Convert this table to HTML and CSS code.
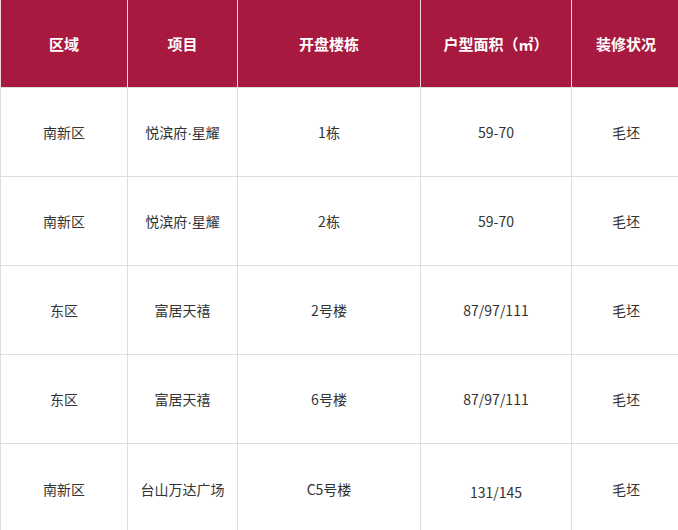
FILE: index.html
```html
<!DOCTYPE html>
<html lang="zh-CN">
<head>
<meta charset="utf-8">
<link rel="stylesheet" href="styles.css">
</head>
<body>
<table class="grid">
  <colgroup>
    <col class="c1"><col class="c2"><col class="c3"><col class="c4"><col class="c5">
  </colgroup>
  <thead>
    <tr class="head">
      <th>区域</th><th>项目</th><th>开盘楼栋</th><th>户型面积（㎡）</th><th>装修状况</th>
    </tr>
  </thead>
  <tbody>
    <tr class="row"><td>南新区</td><td>悦滨府<span class="dot">·</span>星耀</td><td>1栋</td><td>59-70</td><td>毛坯</td></tr>
    <tr class="row"><td>南新区</td><td>悦滨府<span class="dot">·</span>星耀</td><td>2栋</td><td>59-70</td><td>毛坯</td></tr>
    <tr class="row"><td>东区</td><td>富居天禧</td><td>2号楼</td><td>87/97/111</td><td>毛坯</td></tr>
    <tr class="row"><td>东区</td><td>富居天禧</td><td>6号楼</td><td>87/97/111</td><td>毛坯</td></tr>
    <tr class="row last"><td>南新区</td><td>台山万达广场</td><td>C5号楼</td><td class="low">131/145</td><td>毛坯</td></tr>
  </tbody>
</table>
</body>
</html>
```
FILE: styles.css
```css
html, body {
  margin: 0;
  padding: 0;
  background: #ffffff;
}
body {
  font-family: "Noto Sans CJK SC", "Noto Sans", sans-serif;
  color: #333333;
}
.grid {
  border-collapse: collapse;
  table-layout: fixed;
  width: 680px;
  margin-left: 0;
}
.c1 { width: 127px; }
.c2 { width: 110px; }
.c3 { width: 183px; }
.c4 { width: 151px; }
.c5 { width: 109px; }
.grid th, .grid td {
  padding: 0;
  text-align: center;
  vertical-align: middle;
}
.head th {
  height: 87px;
  background: #a8193f;
  color: #ffffff;
  font-size: 15px;
  font-weight: 700;
  border-left: 1px solid #f1d6dd;
  border-right: 1px solid #f1d6dd;
  border-top: none;
  border-bottom: 1px solid #dddddd;
}
.row td {
  height: 88px;
  font-size: 14px;
  border: 1px solid #dddddd;
}
.row.last td {
  height: 84px;
}
.row td.low {
  padding-top: 6px;
}
.dot {
  font-family: "Liberation Sans", sans-serif;
}
```
